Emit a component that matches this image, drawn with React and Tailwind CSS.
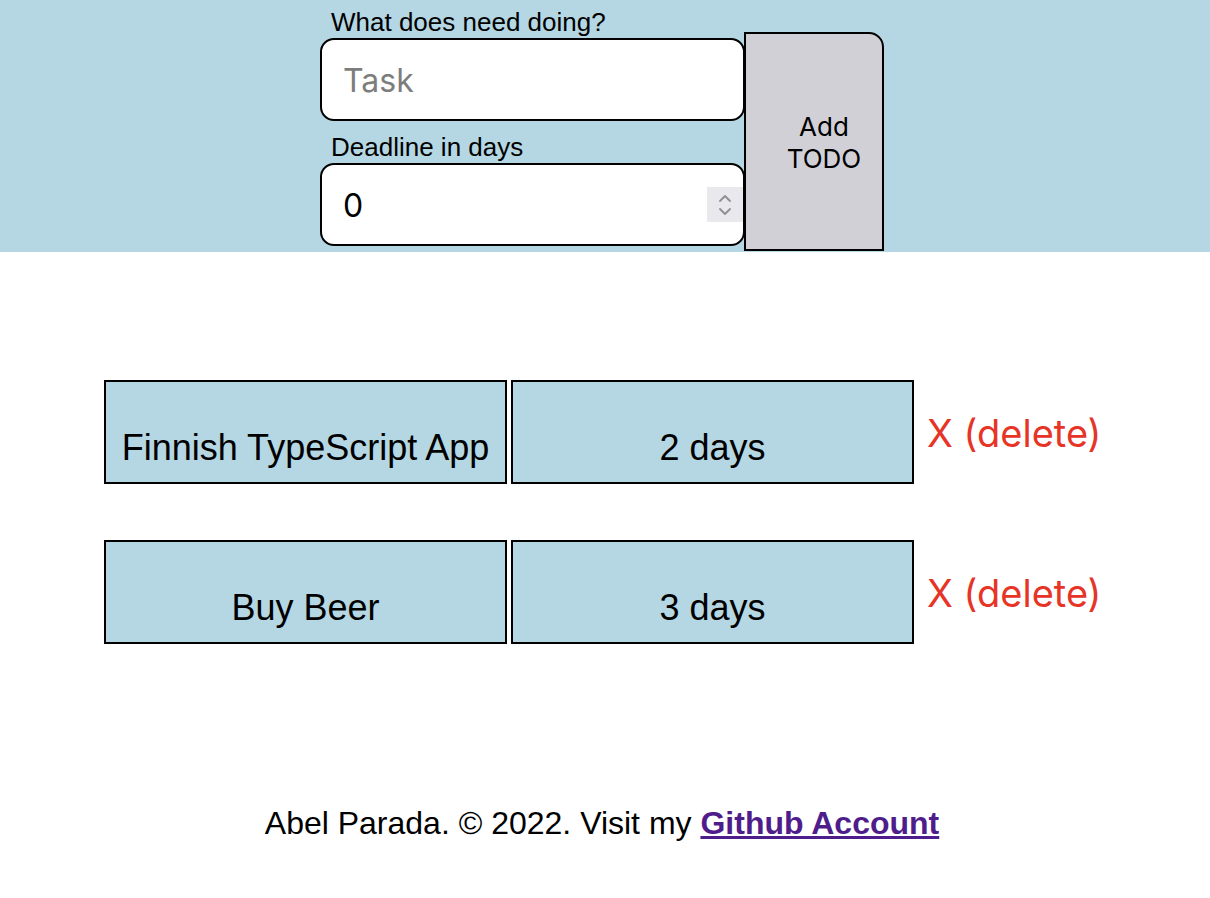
import React, { useState } from "react";

const todos = [
  { task: "Finnish TypeScript App", deadline: 2 },
  { task: "Buy Beer", deadline: 3 },
];

const Spinner = () => (
  <div className="absolute right-[2px] top-[24px] flex h-[35px] w-[36px] items-center justify-center bg-[#e9e8ed]">
    <svg width="16" height="26" viewBox="0 0 16 26" fill="none" stroke="#8e8e93" strokeWidth="1.8" strokeLinecap="round" strokeLinejoin="round">
      <path d="M3 9 L8 4 L13 9" />
      <path d="M3 17 L8 22 L13 17" />
    </svg>
  </div>
);

const App = () => {
  const [task, setTask] = useState("");
  const [deadline, setDeadline] = useState("0");

  return (
    <div className="min-h-[898px] w-full bg-white">
      <div className="w-full bg-[#b5d7e3]">
        <div className="flex w-[1204px] flex-row items-end justify-center pt-2 pb-[1px]">
          <div className="flex w-[425px] flex-col pb-[5px]">
            <label className="h-[29px] pl-[11px] font-['Liberation_Sans',Arial,sans-serif] text-[26px] leading-[29px] text-black">
              What does need doing?
            </label>
            <input
              className="mt-[1px] h-[83px] w-full rounded-[14px] border-2 border-black bg-white pl-[21px] pt-[2px] font-['Inter',sans-serif] text-[32px] text-black outline-none placeholder:text-[#7d7d7d]"
              placeholder="Task"
              value={task}
              onChange={(e) => setTask(e.target.value)}
            />
            <label className="mt-3 h-[29px] pl-[11px] font-['Liberation_Sans',Arial,sans-serif] text-[26px] leading-[29px] text-black">
              Deadline in days
            </label>
            <div className="relative mt-[1px]">
              <input
                className="h-[83px] w-full rounded-[14px] border-2 border-black bg-white pl-[21px] pt-[2px] font-['Inter',sans-serif] text-[32px] text-black outline-none"
                value={deadline}
                onChange={(e) => setDeadline(e.target.value)}
              />
              <Spinner />
            </div>
          </div>
          <button className="ml-[-1px] flex h-[219px] w-[140px] flex-col items-center justify-center rounded-tr-[15px] border-2 border-black bg-[#d1d0d6] pl-[20px] pt-[2px] font-['Inter',sans-serif] text-[26px] leading-[32px] text-black">
            <span>Add</span>
            <span>TODO</span>
          </button>
        </div>
      </div>

      <div className="flex w-[1204px] flex-col gap-[56px] pt-[128px]">
        {todos.map((todo, i) => (
          <div key={i} className="flex flex-row items-center pl-[104px]">
            <div className="flex h-[104px] w-[403px] items-end justify-center border-2 border-black bg-[#b5d7e3] pb-[7px] font-['Liberation_Sans',Arial,sans-serif] text-[36px] text-black">
              {todo.task}
            </div>
            <div className="ml-1 flex h-[104px] w-[403px] items-end justify-center border-2 border-black bg-[#b5d7e3] pb-[7px] font-['Liberation_Sans',Arial,sans-serif] text-[36px] text-black">
              {todo.deadline} days
            </div>
            <button className="ml-[13px] pt-[2px] font-['Inter',sans-serif] text-[38px] text-[#e63527]">
              X (delete)
            </button>
          </div>
        ))}
      </div>

      <div className="w-[1204px] pt-[155px] text-center font-['Liberation_Sans',Arial,sans-serif] text-[32px] text-black">
        Abel Parada. © 2022. Visit my{" "}
        <a href="#" className="font-bold text-[#4e1d8b] underline">
          Github Account
        </a>
      </div>
    </div>
  );
};

export default App;
